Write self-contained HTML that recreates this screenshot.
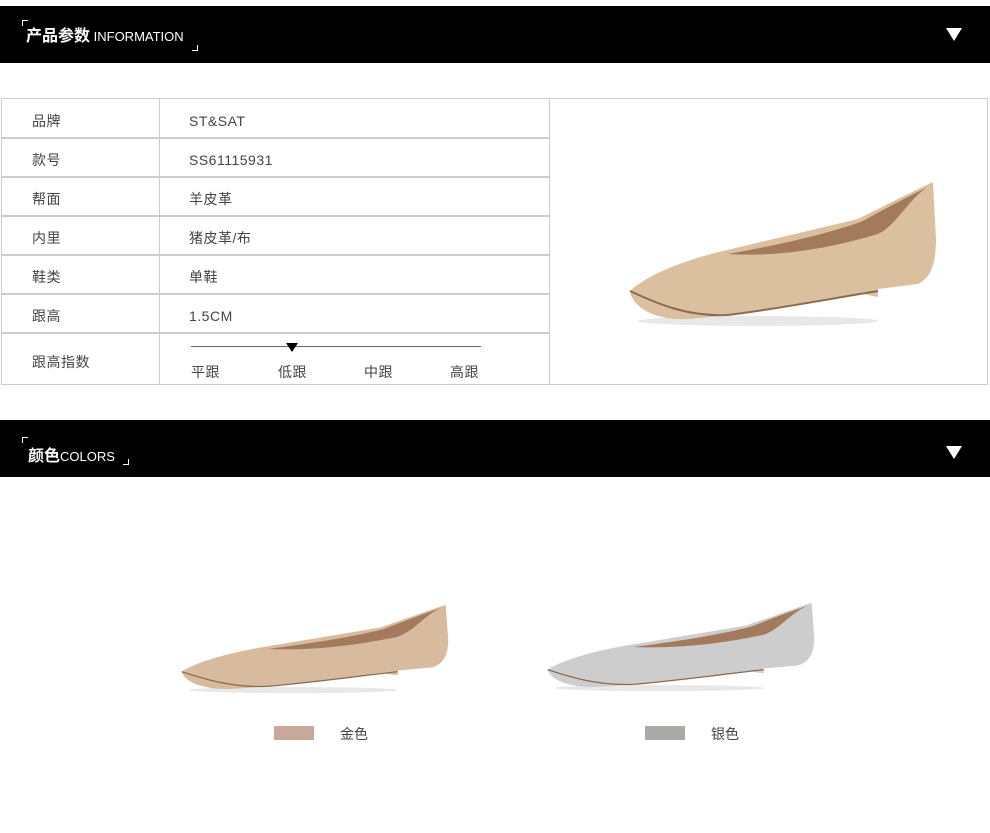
<!DOCTYPE html>
<html><head><meta charset="utf-8"><style>
body{margin:0;background:#fff;width:990px;height:833px;position:relative;font-family:"Liberation Sans","Noto Sans CJK SC",sans-serif;color:#333;overflow:hidden}
.bar{position:absolute;left:0;width:990px;height:57px;background:#000;color:#fff}
.bar .t{position:absolute;left:22px;top:16px;font-size:16px;font-weight:bold;white-space:nowrap}
.bar .t small{font-size:13px;font-weight:normal}
.bar .c1{position:absolute;width:5px;height:5px;border-left:1px solid #fff;border-top:1px solid #fff}
.bar .c2{position:absolute;width:5px;height:5px;border-right:1px solid #fff;border-bottom:1px solid #fff}
.bar .arr{position:absolute;right:28px;top:22px;width:0;height:0;border-left:8px solid transparent;border-right:8px solid transparent;border-top:13px solid #fff}
table{position:absolute;left:1px;top:98px;border-collapse:collapse;font-size:14px}
td{border:1px solid #ccc;border-width:2px 1px 0 1px;padding:6px 0 0 0;color:#444;box-sizing:border-box;letter-spacing:0.5px}
td.k{width:158px;padding-left:30px}
td.v{width:390px;padding-left:29px}
.img{position:absolute;left:549px;top:98px;width:437px;height:285px;border:1px solid #ccc}
.sw{position:absolute;width:40px;height:14px}
.lb{position:absolute;font-size:14px;color:#444}
</style></head><body>
<svg width="0" height="0" style="position:absolute"><defs>
<symbol id="shoe" viewBox="0 0 310 150">
<ellipse cx="130" cy="142" rx="120" ry="5" fill="#e8e8e8"/>
<path d="M2,112 C20,95 60,80 95,72 L230,40 C260,25 290,10 305,3 L308,60 C308,90 300,100 290,105 L250,110 L250,118 L235,115 C180,125 120,135 60,140 C30,142 5,130 2,112 Z" fill="currentColor"/>
<path d="M100,75 C150,66 200,55 235,42 C260,28 285,15 300,8 C280,20 270,45 250,55 C200,70 150,78 100,75 Z" fill="#a47a5d"/>
<path d="M2,112 C30,125 60,138 100,136 C150,130 200,120 250,112" stroke="#8a6b52" stroke-width="2" fill="none"/>
</symbol></defs></svg>

<div class="bar" style="top:6px"><div class="c1" style="left:22px;top:14px"></div><div class="t" style="left:26px">产品参数<small> INFORMATION</small></div><div class="c2" style="left:192px;top:39px"></div><div class="arr"></div></div>

<table>
<tr style="height:39px"><td class="k" style="border-top-width:1px">品牌</td><td class="v" style="border-top-width:1px">ST&amp;SAT</td></tr>
<tr style="height:39px"><td class="k">款号</td><td class="v">SS61115931</td></tr>
<tr style="height:39px"><td class="k">帮面</td><td class="v">羊皮革</td></tr>
<tr style="height:39px"><td class="k">内里</td><td class="v">猪皮革/布</td></tr>
<tr style="height:39px"><td class="k">鞋类</td><td class="v">单鞋</td></tr>
<tr style="height:39px"><td class="k">跟高</td><td class="v">1.5CM</td></tr>
<tr style="height:52px"><td class="k" style="border-bottom:1px solid #ccc">跟高指数</td><td class="v" style="border-bottom:1px solid #ccc;position:relative">
<div style="position:absolute;left:31px;top:12px;width:290px;height:1px;background:#666"></div>
<div style="position:absolute;left:126px;top:9px;border-left:6px solid transparent;border-right:6px solid transparent;border-top:9px solid #000"></div>
<div style="position:absolute;left:31px;top:28px;width:300px;font-size:14px">
<span style="position:absolute;left:0">平跟</span><span style="position:absolute;left:87px">低跟</span><span style="position:absolute;left:173px">中跟</span><span style="position:absolute;left:259px">高跟</span></div>
</td></tr>
</table>
<div class="img"><svg style="position:absolute;left:78px;top:80px;color:#dbc09f" width="310" height="150"><use href="#shoe"/></svg></div>

<div class="bar" style="top:420px"><div class="c1" style="left:22px;top:17px"></div><div class="t" style="left:28px;top:22px">颜色<small>COLORS</small></div><div class="c2" style="left:123px;top:39px"></div><div class="arr" style="top:26px"></div></div>

<svg style="position:absolute;left:180px;top:603px;color:#d8bb9f" width="270" height="92" viewBox="0 0 310 150" preserveAspectRatio="none"><use href="#shoe"/></svg>
<svg style="position:absolute;left:546px;top:601px;color:#cdcdcd" width="270" height="92" viewBox="0 0 310 150" preserveAspectRatio="none"><use href="#shoe"/></svg>

<div class="sw" style="left:274px;top:726px;background:#c8a898"></div><div class="lb" style="left:340px;top:724px">金色</div>
<div class="sw" style="left:645px;top:726px;background:#aaaba6"></div><div class="lb" style="left:711px;top:724px">银色</div>
</body></html>
